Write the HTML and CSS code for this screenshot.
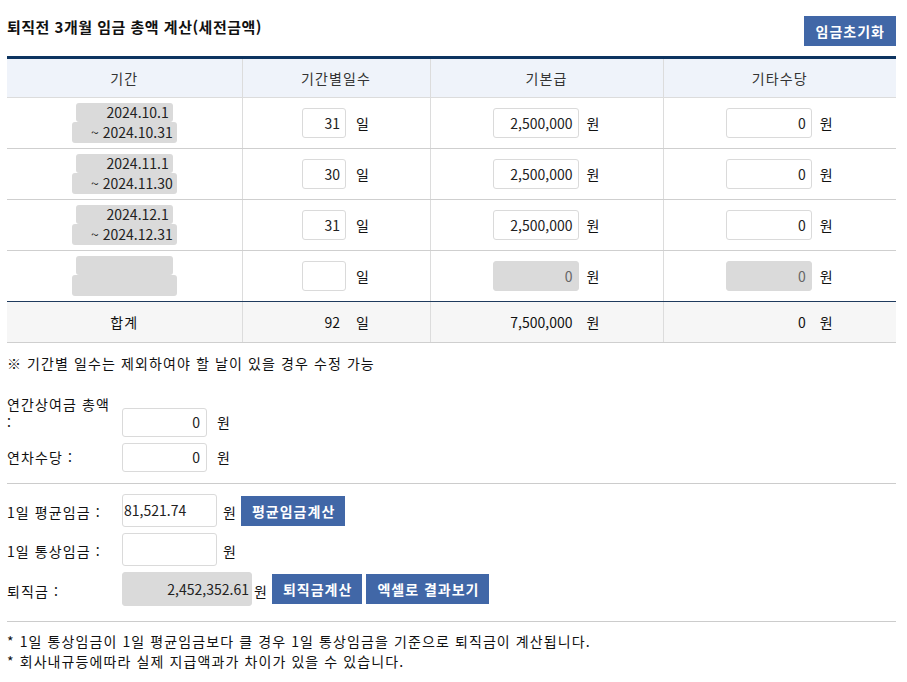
FILE: index.html
```html
<!DOCTYPE html>
<html lang="ko">
<head>
<meta charset="utf-8">
<title>퇴직금 계산</title>
<link rel="stylesheet" href="styles.css">
</head>
<body>
<div class="wrap">
  <div class="head">
    <h2 class="title">퇴직전 3개월 임금 총액 계산(세전금액)</h2>
    <button class="btn top">임금초기화</button>
  </div>
  <table class="grid">
    <colgroup><col class="c1"><col class="c2"><col class="c3"><col class="c4"></colgroup>
    <thead>
      <tr><th>기간</th><th>기간별일수</th><th>기본급</th><th>기타수당</th></tr>
    </thead>
    <tbody>
      <tr>
        <td><div class="period"><span class="p1">2024.10.1</span><span class="p2">~ 2024.10.31</span></div></td>
        <td><div class="cell"><span class="in day">31</span><span class="unit">일</span></div></td>
        <td><div class="cell"><span class="in amt">2,500,000</span><span class="unit">원</span></div></td>
        <td><div class="cell"><span class="in amt">0</span><span class="unit">원</span></div></td>
      </tr>
      <tr>
        <td><div class="period"><span class="p1">2024.11.1</span><span class="p2">~ 2024.11.30</span></div></td>
        <td><div class="cell"><span class="in day">30</span><span class="unit">일</span></div></td>
        <td><div class="cell"><span class="in amt">2,500,000</span><span class="unit">원</span></div></td>
        <td><div class="cell"><span class="in amt">0</span><span class="unit">원</span></div></td>
      </tr>
      <tr>
        <td><div class="period"><span class="p1">2024.12.1</span><span class="p2">~ 2024.12.31</span></div></td>
        <td><div class="cell"><span class="in day">31</span><span class="unit">일</span></div></td>
        <td><div class="cell"><span class="in amt">2,500,000</span><span class="unit">원</span></div></td>
        <td><div class="cell"><span class="in amt">0</span><span class="unit">원</span></div></td>
      </tr>
      <tr class="last">
        <td><div class="period"><span class="p1"></span><span class="p2"></span></div></td>
        <td><div class="cell"><span class="in day"></span><span class="unit">일</span></div></td>
        <td><div class="cell"><span class="in amt ro">0</span><span class="unit">원</span></div></td>
        <td><div class="cell"><span class="in amt ro">0</span><span class="unit">원</span></div></td>
      </tr>
    </tbody>
    <tfoot>
      <tr>
        <td>합계</td>
        <td><div class="cell"><span class="val day">92</span><span class="unit">일</span></div></td>
        <td><div class="cell"><span class="val amt">7,500,000</span><span class="unit">원</span></div></td>
        <td><div class="cell"><span class="val amt">0</span><span class="unit">원</span></div></td>
      </tr>
    </tfoot>
  </table>
  <p class="note">※ 기간별 일수는 제외하여야 할 날이 있을 경우 수정 가능</p>

  <div class="form first">
    <div class="row"><span class="label">연간상여금 총액 :</span><span class="fin r">0</span><span class="unit">원</span></div>
    <div class="row"><span class="label">연차수당 :</span><span class="fin r">0</span><span class="unit">원</span></div>
  </div>
  <hr class="sep">
  <div class="form second">
    <div class="row"><span class="label">1일 평균임금 :</span><span class="fin wide l">81,521.74</span><span class="unit near">원</span><button class="btn sm">평균임금계산</button></div>
    <div class="row"><span class="label">1일 통상임금 :</span><span class="fin wide l"></span><span class="unit near">원</span></div>
    <div class="row"><span class="label">퇴직금 :</span><span class="fin big r ro">2,452,352.61</span><span class="unit tight">원</span><button class="btn sm">퇴직금계산</button><button class="btn sm">엑셀로 결과보기</button></div>
  </div>
  <hr class="sep bottom">
  <div class="foot">
    <p>* 1일 통상임금이 1일 평균임금보다 클 경우 1일 통상임금을 기준으로 퇴직금이 계산됩니다.</p>
    <p>* 회사내규등에따라 실제 지급액과가 차이가 있을 수 있습니다.</p>
  </div>
</div>
</body>
</html>
```

FILE: styles.css
```css
* { box-sizing: border-box; }
body {
  margin: 0;
  font-family: "Noto Sans CJK KR", "Noto Sans", sans-serif;
  font-size: 14px;
  letter-spacing: 1.1px;
  color: #111;
  background: #fff;
}
.wrap {
  width: 889px;
  margin-left: 7px;
  padding-top: 16px;
}
.head {
  display: flex;
  justify-content: space-between;
  align-items: center;
  height: 30px;
  margin-bottom: 10px;
}
.title {
  margin: 0;
  font-size: 15px;
  font-weight: bold;
  line-height: 22px;
  position: relative;
  top: -4px;
  letter-spacing: 0.5px;
}
.btn {
  border: none;
  background: #4167a7;
  color: #fff;
  font-family: inherit;
  font-size: 14px;
  font-weight: bold;
  letter-spacing: 1px;
  height: 30px;
  padding: 0 10px 0 11px;
  line-height: 30px;
  cursor: pointer;
}
.btn.top { padding: 0 11px 0 12px; }
.grid {
  width: 889px;
  border-collapse: collapse;
  table-layout: fixed;
  border-top: 3px solid #0d3460;
}
.c1 { width: 235px; }
.c2 { width: 188px; }
.c3 { width: 233px; }
.c4 { width: 233px; }
.grid th {
  height: 40px;
  background: #eff3fa;
  font-weight: normal;
  color: #333;
  border-right: 1px solid #dcdcdc;
  border-bottom: 1px solid #dcdcdc;
  padding: 0;
}
.grid th:last-child, .grid td:last-child { border-right: none; }
.grid td {
  height: 51px;
  padding: 0;
  text-align: center;
  border-right: 1px solid #dcdcdc;
  border-bottom: 1px solid #cfcfcf;
}
.grid tr.last td { border-bottom: 1px solid #1f3b5e; }
.grid tfoot td {
  height: 41px;
  background: #f6f6f6;
  border-bottom: 1px solid #cfcfcf;
}
.period {
  display: flex;
  flex-direction: column;
  align-items: center;
}
.period span {
  display: block;
  background: #dadada;
  border-radius: 3px;
  text-align: right;
  color: #222;
  letter-spacing: 0;
  padding-right: 4px;
}
.p1 { width: 97px; height: 19px; line-height: 19px; }
.p2 { width: 105px; height: 21px; line-height: 21px; }
.cell {
  display: flex;
  justify-content: center;
  align-items: center;
}
.in {
  display: block;
  height: 30px;
  line-height: 28px;
  border: 1px solid #dadada;
  border-radius: 3px;
  background: #fff;
  text-align: right;
  padding-right: 5px;
  color: #222;
  letter-spacing: 0;
}
.in.ro { background: #dadada; color: #666; border-color: #dadada; }
.day { width: 44px; }
.amt { width: 86px; }
.val { display: block; text-align: right; padding-right: 6px; letter-spacing: 0; }
.cell .unit { margin-left: 8px; }
.cell .day + .unit { margin-left: 10px; }
.note {
  margin: 10px 0 0;
  line-height: 20px;
}
.form.first { margin-top: 22px; }
.row {
  display: flex;
  align-items: flex-end;
  margin-bottom: 6px;
}
.label {
  width: 115px;
  line-height: 18px;
  padding-right: 6px;
  padding-bottom: 6px;
}
.row .unit {
  margin-left: 10px;
  line-height: 18px;
  padding-bottom: 6px;
}
.row .unit.near { margin-left: 6px; }
.row .unit.tight { margin-left: 2px; }
.fin {
  display: block;
  width: 85px;
  height: 29px;
  line-height: 27px;
  border: 1px solid #dadada;
  border-radius: 3px;
  background: #fff;
  color: #222;
  letter-spacing: 0;
}
.fin.r { text-align: right; padding-right: 6px; }
.fin.l { text-align: left; padding-left: 1px; }
.fin.wide { width: 95px; height: 33px; line-height: 31px; }
.fin.big { width: 130px; height: 34px; line-height: 32px; padding-right: 2px; }
.fin.ro { background: #dadada; border-color: #dadada; }
.row .btn { margin-left: 4px; margin-bottom: 2px; }
.form.second .row:first-child .btn { margin-bottom: 1px; }
.sep {
  border: none;
  border-top: 1px solid #cccccc;
  margin: 11px 0 10px;
  height: 0;
}
.form.second .row:last-child { margin-bottom: 0; }
.sep.bottom { margin: 15px 0 0; }
.foot { margin-top: 9px; }
.foot p { margin: 0; line-height: 20px; }
```
